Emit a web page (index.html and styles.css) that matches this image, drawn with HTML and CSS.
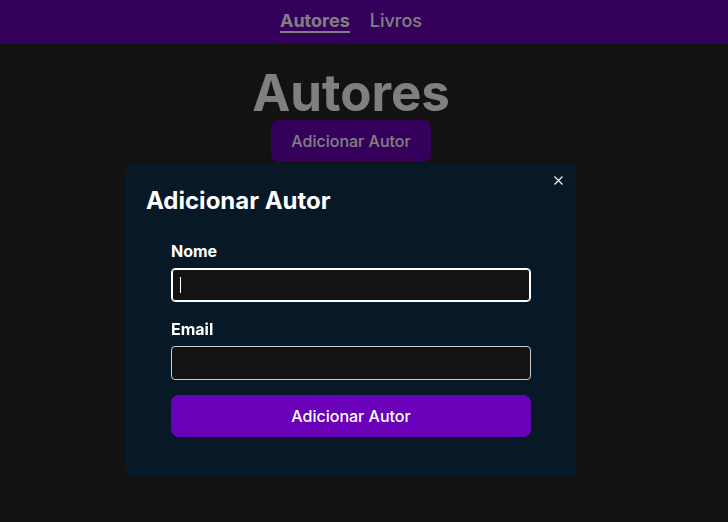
FILE: index.html
```html
<!DOCTYPE html>
<html lang="pt-BR">
<head>
  <meta charset="utf-8">
  <meta name="viewport" content="width=device-width, initial-scale=1">
  <title>Autores</title>
  <link rel="stylesheet" href="styles.css">
</head>
<body>
  <header class="navbar">
    <nav class="nav-links">
      <a class="nav-link active" href="#autores" aria-current="page">Autores</a>
      <a class="nav-link" href="#livros">Livros</a>
    </nav>
  </header>
  <main class="page">
    <h1 class="page-title">Autores</h1>
    <button class="button" type="button">Adicionar Autor</button>
  </main>
  <div class="overlay">
    <section class="modal" role="dialog" aria-modal="true" aria-labelledby="modal-title">
      <button class="close" type="button" aria-label="Fechar">
        <svg viewBox="0 0 15 15" width="15" height="15" aria-hidden="true">
          <path d="M3.5 3.5L11.5 11.5M11.5 3.5L3.5 11.5" fill="none" stroke="currentColor" stroke-width="1.1"/>
        </svg>
      </button>
      <h2 class="modal-title" id="modal-title">Adicionar Autor</h2>
      <form class="form">
        <div class="field">
          <label class="label" for="nome">Nome</label>
          <input class="input" id="nome" type="text" placeholder=" " autofocus>
          <span class="caret" aria-hidden="true"></span>
        </div>
        <div class="field">
          <label class="label" for="email">Email</label>
          <input class="input" id="email" type="email" placeholder=" ">
        </div>
        <button class="button" type="submit">Adicionar Autor</button>
      </form>
    </section>
  </div>
</body>
</html>
```
FILE: styles.css
```css
:root {
  --purple: #6a00b8;
  --dark: #131313;
  --navy: #071827;
  --gutter: 26px;
}

* {
  box-sizing: border-box;
}

body {
  margin: 0;
  min-height: 100vh;
  background: #242424;
  color: #fff;
  font-family: Inter, "Liberation Sans", sans-serif;
  font-size: 16px;
  line-height: 24px;
}

.navbar {
  padding: 10px var(--gutter) 11px 0;
  background: var(--purple);
}

.nav-links {
  display: flex;
  justify-content: center;
  gap: 20px;
}

.nav-link {
  height: 23px;
  color: #fff;
  font-size: 18px;
  font-weight: 500;
  line-height: 22px;
  text-decoration: none;
}

.nav-link.active {
  border-bottom: 2px solid #fff;
  font-weight: 700;
}

.page {
  display: flex;
  flex-direction: column;
  align-items: center;
  padding: 22px var(--gutter) 20px 0;
}

.page-title {
  margin: 0;
  font-size: 51px;
  font-weight: 700;
  line-height: 54px;
}

.button {
  padding: 9px 20px;
  border: 0;
  border-radius: 8px;
  background: var(--purple);
  color: #fff;
  font: inherit;
  font-weight: 500;
  cursor: pointer;
}

.overlay {
  position: fixed;
  inset: 0;
  display: flex;
  align-items: flex-start;
  justify-content: center;
  padding: 163px var(--gutter) 0 0;
  background: rgba(0, 0, 0, 0.5);
}

.modal {
  position: relative;
  width: 90%;
  max-width: 450px;
  padding: 21px 20px 40px;
  border-radius: 6px;
  background: var(--navy);
}

.close {
  position: absolute;
  top: 10px;
  right: 10px;
  display: flex;
  padding: 0;
  border: 0;
  background: none;
  color: #fff;
  cursor: pointer;
}

.modal-title {
  margin: 0;
  font-size: 24px;
  font-weight: 700;
  line-height: 34px;
}

.form {
  display: flex;
  flex-direction: column;
  gap: 15px;
  padding: 21px 25px 0;
}

.field {
  position: relative;
  display: flex;
  flex-direction: column;
  gap: 5px;
}

.label {
  font-weight: 700;
}

.input {
  height: 34px;
  padding: 8px;
  border: 1px solid #ccc;
  border-radius: 4px;
  background: var(--dark);
  color: #fff;
  font: inherit;
  font-size: 13px;
  line-height: 16px;
}

.input:focus {
  border-color: #fff;
  outline: 1px solid #fff;
  outline-offset: -2px;
}

/* Text cursor shown while the focused field is empty */
.input:focus:placeholder-shown {
  caret-color: transparent;
}

.caret {
  position: absolute;
  bottom: 9px;
  left: 9px;
  display: none;
  width: 1px;
  height: 16px;
  background: #fff;
  pointer-events: none;
}

.input:focus:placeholder-shown + .caret {
  display: block;
}
```
